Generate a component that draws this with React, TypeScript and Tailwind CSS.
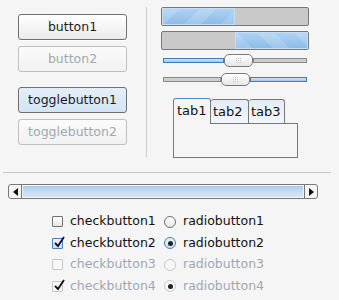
import React from "react";

const stripe =
  "bg-[repeating-linear-gradient(135deg,rgba(255,255,255,0.16)_0px,rgba(255,255,255,0.16)_12px,rgba(255,255,255,0)_12px,rgba(255,255,255,0)_26px),linear-gradient(#aed2f3,#8dbbe6)]";
const stripeRev =
  "bg-[repeating-linear-gradient(45deg,rgba(255,255,255,0.16)_0px,rgba(255,255,255,0.16)_12px,rgba(255,255,255,0)_12px,rgba(255,255,255,0)_26px),linear-gradient(#aed2f3,#8dbbe6)]";

function Button({ label, disabled, active }: { label: string; disabled?: boolean; active?: boolean }) {
  const base = "h-[26px] w-[109px] rounded-[3px] border flex items-center justify-center";
  let look = "border-[#6f6f6f] bg-[linear-gradient(#ffffff,#ebebeb)] text-[#1c1c1c] shadow-[0_1px_0_#fff]";
  if (active) look = "border-[#6f6f6f] bg-[linear-gradient(#e4eef8,#d3e4f4)] text-[#1c1c1c]";
  if (disabled) look = "border-[#c0c0c0] bg-[linear-gradient(#fbfbfb,#f1f1f1)] text-[#9ea8b2]";
  return <div className={`${base} ${look}`}>{label}</div>;
}

function Thumb() {
  return (
    <div className="w-[29px] h-[13px] rounded-[5px] border border-[#7a7a7a] bg-[linear-gradient(#ffffff,#e6e6e6)] flex items-center justify-center">
      <div className="grid grid-cols-3 gap-[1px]">
        {Array.from({ length: 9 }).map((_, i) => (
          <div key={i} className="w-[1px] h-[1px] bg-[#c4c4c4]" />
        ))}
      </div>
    </div>
  );
}

function Check({ checked, disabled }: { checked?: boolean; disabled?: boolean }) {
  const box = disabled
    ? "border-[#c8c8c8] bg-[#f7f7f7]"
    : checked
    ? "border-[#4a7fbf] bg-[linear-gradient(#e9f1fa,#cfe0f2)]"
    : "border-[#6f6f6f] bg-[linear-gradient(#ffffff,#e6e6e6)]";
  return (
    <div className={`relative w-[11px] h-[11px] rounded-[1px] border ${box}`}>
      {checked && (
        <svg viewBox="0 0 12 12" className="absolute left-[0px] top-[-3px] w-[12px] h-[12px]">
          <path d="M2 7 L5 10 L11 1" fill="none" stroke="#111" strokeWidth="1.8" />
        </svg>
      )}
    </div>
  );
}

function Radio({ checked, disabled }: { checked?: boolean; disabled?: boolean }) {
  const ring = disabled
    ? "border-[#c8c8c8] bg-[#f7f7f7]"
    : checked
    ? "border-[#4a7fbf] bg-[linear-gradient(#e9f1fa,#cfe0f2)]"
    : "border-[#6f6f6f] bg-[linear-gradient(#ffffff,#e6e6e6)]";
  return (
    <div className={`w-[12px] h-[12px] rounded-full border flex items-center justify-center ${ring}`}>
      {checked && <div className="w-[5px] h-[5px] rounded-full bg-[#222]" />}
    </div>
  );
}

const rows = [
  { n: 1, checked: false, disabled: false },
  { n: 2, checked: true, disabled: false },
  { n: 3, checked: false, disabled: true },
  { n: 4, checked: true, disabled: true },
];

export default function App() {
  return (
    <div className="w-[339px] h-[300px] bg-[#f5f5f5] text-[12.5px] overflow-hidden" style={{ fontFamily: '"DejaVu Sans", sans-serif' }}>
      <div className="flex h-[165px]">
        <div className="pl-[18px] pt-[14px] flex flex-col">
          <Button label="button1" />
          <div className="mt-[6px]"><Button label="button2" disabled /></div>
          <div className="mt-[15px]"><Button label="togglebutton1" active /></div>
          <div className="mt-[6px]"><Button label="togglebutton2" disabled /></div>
        </div>
        <div className="ml-[19px] mt-[7px] w-[1px] h-[150px] bg-[#cfcfcf]" />
        <div className="ml-[14px] pt-[7px] flex flex-col">
          <div className="w-[148px] h-[19px] rounded-[2px] border border-[#777] bg-[#c9c9c9] flex">
            <div className={`w-[73px] h-full border border-[#c4def5] ${stripe}`} />
          </div>
          <div className="mt-[5px] w-[148px] h-[19px] rounded-[2px] border border-[#777] bg-[#c9c9c9] flex justify-end">
            <div className={`w-[73px] h-full border border-[#c4def5] ${stripeRev}`} />
          </div>
          <div className="mt-[4px] ml-[2px] w-[144px] h-[13px] flex items-center">
            <div className="w-[61px] h-[5px] border border-[#3f7cc0] bg-[linear-gradient(#cfe3f7,#9fc6ec)]" />
            <Thumb />
            <div className="flex-1 h-[5px] border border-[#8a8a8a] bg-[#cdcdcd]" />
          </div>
          <div className="mt-[6px] ml-[2px] w-[144px] h-[13px] flex items-center">
            <div className="w-[58px] h-[5px] border border-[#8a8a8a] bg-[#cdcdcd]" />
            <Thumb />
            <div className="flex-1 h-[5px] border border-[#3f7cc0] bg-[linear-gradient(#cfe3f7,#9fc6ec)]" />
          </div>
          <div className="mt-[12px] ml-[12px] flex flex-col text-[13px] text-[#111]">
            <div className="flex items-end h-[25px]">
              <div className="w-[38px] rounded-t-[3px] border border-b-0 border-[#777] border-t-[#4a8ad0] bg-[#f5f5f5] pl-[3px] pt-[2px] relative z-10 -mb-[1px] h-[26px]">tab1</div>
              <div className="w-[38px] h-[24px] rounded-t-[3px] border border-b-0 border-l-0 border-[#777] bg-[linear-gradient(#e3ecf7,#f3f7fc)] pl-[2px] pt-[2px]">tab2</div>
              <div className="w-[36px] h-[24px] rounded-t-[3px] border border-b-0 border-l-0 border-[#777] bg-[linear-gradient(#e3ecf7,#f3f7fc)] pl-[2px] pt-[2px]">tab3</div>
            </div>
            <div className="w-[125px] h-[35px] border border-[#777] bg-[#f5f5f5]" />
          </div>
        </div>
      </div>
      <div className="ml-[3px] mt-[7px] w-[328px] h-[1px] bg-[#c8c8c8]" />
      <div className="ml-[8px] mt-[11px] w-[310px] h-[15px] rounded-[3px] border border-[#777] flex bg-[#f5f5f5]">
        <div className="w-[13px] h-full border-r border-[#777] flex items-center justify-center">
          <svg viewBox="0 0 5 8" className="w-[5px] h-[8px]"><path d="M5 0 L0 4 L5 8 Z" fill="#111" /></svg>
        </div>
        <div className="flex-1 m-[1px] bg-[linear-gradient(#a9cbeb,#c4dcf3,#d6e7f7)]" />
        <div className="w-[13px] h-full border-l border-[#777] flex items-center justify-center">
          <svg viewBox="0 0 5 8" className="w-[5px] h-[8px]"><path d="M0 0 L5 4 L0 8 Z" fill="#111" /></svg>
        </div>
      </div>
      <div className="ml-[52px] mt-[12px] flex flex-col">
        {rows.map((r) => (
          <div key={r.n} className={`flex items-center h-[21.5px] ${r.disabled ? "text-[#9ea8b2]" : "text-[#111]"}`}>
            <Check checked={r.checked} disabled={r.disabled} />
            <span className="ml-[7px] w-[94px]">checkbutton{r.n}</span>
            <Radio checked={r.checked} disabled={r.disabled} />
            <span className="ml-[7px]">radiobutton{r.n}</span>
          </div>
        ))}
      </div>
    </div>
  );
}
